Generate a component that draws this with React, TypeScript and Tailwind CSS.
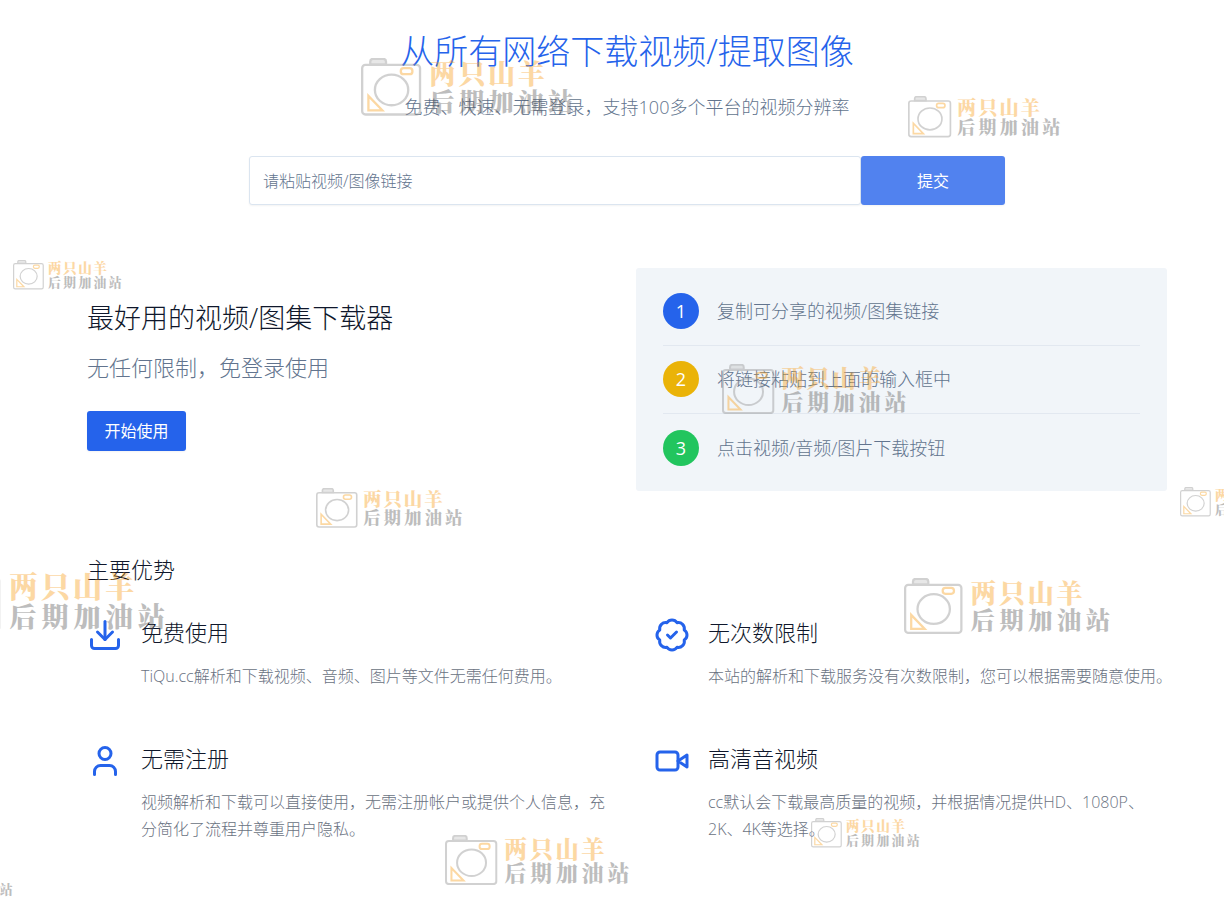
import React from "react";
import { BadgeCheck, Download, User } from "lucide-react";

type MarkProps = { className: string };

function StationMark({ className }: MarkProps) {
  return (
    <svg
      aria-hidden="true"
      viewBox="0 0 460 125"
      fill="none"
      className={`pointer-events-none absolute ${className}`}
    >
      <g opacity="0.4">
        <g stroke="#8f8f8f" strokeWidth="5">
          <rect x="2.5" y="15" width="125" height="107" rx="7" />
          <path d="M20 14V8a6 6 0 0 1 6-6h22a6 6 0 0 1 6 6v6Z" fill="#c4c4c4" />
          <ellipse cx="66" cy="69" rx="36" ry="33" />
        </g>
        <g stroke="#f9a01b" strokeWidth="5">
          <rect x="86" y="22" width="25" height="13" rx="6" />
          <path d="M16 82v31h30Z" />
        </g>
        <g
          fontWeight="900"
          fontFamily="'Noto Serif CJK SC', 'Noto Sans CJK SC', serif"
        >
          <text x="147 211 275 339" y="56" fontSize="58" fill="#f9a01b">
            两只山羊
          </text>
          <text x="148 212 276 340 404" y="114" fontSize="54" fill="#5c5c5c">
            后期加油站
          </text>
        </g>
      </g>
    </svg>
  );
}

function VideoIcon({ className }: { className?: string }) {
  return (
    <svg
      viewBox="0 0 24 24"
      fill="none"
      stroke="currentColor"
      strokeWidth="2"
      strokeLinecap="round"
      strokeLinejoin="round"
      aria-hidden="true"
      className={className}
    >
      <path d="m22 8-6 4 6 4V8Z" />
      <rect x="2" y="6" width="14" height="12" rx="2" />
    </svg>
  );
}

const marks = [
  "left-[361px] top-[58px] w-[213px]",
  "left-[908px] top-[96px] w-[153px]",
  "left-[13px] top-[260px] w-[109px]",
  "left-[722px] top-[364px] w-[185px]",
  "left-[316px] top-[488px] w-[147px]",
  "left-[1180px] top-[487px] w-[109px]",
  "-left-[65px] top-[570px] w-[231px]",
  "left-[904px] top-[578px] w-[207px]",
  "left-[445px] top-[835px] w-[185px]",
  "left-[811px] top-[818px] w-[109px]",
  "-left-[96px] top-[867px] w-[109px]",
];

const steps = [
  { text: "复制可分享的视频/图集链接", color: "bg-[#2563eb]" },
  { text: "将链接粘贴到上面的输入框中", color: "bg-[#eab308]" },
  { text: "点击视频/音频/图片下载按钮", color: "bg-[#22c55e]" },
];

const features = [
  {
    Icon: Download,
    title: "免费使用",
    text: "TiQu.cc解析和下载视频、音频、图片等文件无需任何费用。",
  },
  {
    Icon: BadgeCheck,
    title: "无次数限制",
    text: "本站的解析和下载服务没有次数限制，您可以根据需要随意使用。",
  },
  {
    Icon: User,
    title: "无需注册",
    text: "视频解析和下载可以直接使用，无需注册帐户或提供个人信息，充分简化了流程并尊重用户隐私。",
  },
  {
    Icon: VideoIcon,
    title: "高清音视频",
    text: "cc默认会下载最高质量的视频，并根据情况提供HD、1080P、2K、4K等选择。",
  },
];

export default function App() {
  return (
    <div
      lang="zh-CN"
      className="relative min-h-screen overflow-hidden bg-white pr-[57px] pb-16 pl-[87px] font-['Open_Sans','Noto_Sans_CJK_SC',sans-serif] font-light text-slate-900"
    >
      <main className="mx-auto max-w-[1080px]">
        <header className="pt-[31px] text-center">
          <h1 className="text-[34px] leading-10 text-[#2563eb]">
            从所有网络下载视频/提取图像
          </h1>
          <p className="mt-[22px] text-lg leading-7 text-slate-500">
            免费、快速、无需登录，支持100多个平台的视频分辨率
          </p>
          <form
            className="mx-auto mt-[35px] flex h-[49px] max-w-[756px]"
            onSubmit={(e) => e.preventDefault()}
          >
            <label htmlFor="link" className="sr-only">
              请粘贴视频/图像链接
            </label>
            <input
              id="link"
              type="text"
              placeholder="请粘贴视频/图像链接"
              className="min-w-0 flex-1 rounded-[3px] border border-[#dbe5f0] bg-white px-[13px] text-base shadow-xs outline-none placeholder:text-slate-500"
            />
            <button
              type="submit"
              className="w-36 rounded-[3px] bg-[#5182ef] text-base font-normal text-white shadow-xs"
            >
              提交
            </button>
          </form>
        </header>

        <section className="mt-[63px] grid grid-cols-2 gap-[18px]">
          <div className="pt-8">
            <h2 className="text-[27px] leading-9">最好用的视频/图集下载器</h2>
            <p className="mt-[15px] text-[22px] leading-8 text-slate-500">
              无任何限制，免登录使用
            </p>
            <button
              type="button"
              className="mt-7 h-10 w-[99px] rounded-[3px] bg-[#2563eb] text-base font-normal text-white shadow-xs"
            >
              开始使用
            </button>
          </div>
          <ol className="divide-y divide-slate-200 rounded-[3px] bg-[#f1f5f9] px-[27px] py-[25px]">
            {steps.map((s, i) => (
              <li
                key={s.text}
                className="flex items-center gap-[18px] pt-[15px] pb-4 text-lg leading-7 text-slate-500 first:pt-0 last:pt-4 last:pb-0"
              >
                <span
                  className={`flex size-9 shrink-0 items-center justify-center rounded-full font-normal text-white ${s.color}`}
                >
                  {i + 1}
                </span>
                <span>{s.text}</span>
              </li>
            ))}
          </ol>
        </section>

        <section className="mt-[62px]">
          <h2 className="text-[22px] leading-8">主要优势</h2>
          <div className="mt-8 grid grid-cols-2 gap-x-[54px] gap-y-[53px]">
            {features.map(({ Icon, title, text }) => (
              <article key={title} className="flex gap-[18px]">
                <Icon className="size-9 shrink-0 text-[#2563eb]" />
                <div className="-mr-2 min-w-0 flex-1">
                  <h3 className="text-[22px] leading-[30px]">{title}</h3>
                  <p className="mt-4 text-base leading-[27px] text-gray-500">
                    {text}
                  </p>
                </div>
              </article>
            ))}
          </div>
        </section>
      </main>

      {marks.map((m) => (
        <StationMark key={m} className={m} />
      ))}
    </div>
  );
}
